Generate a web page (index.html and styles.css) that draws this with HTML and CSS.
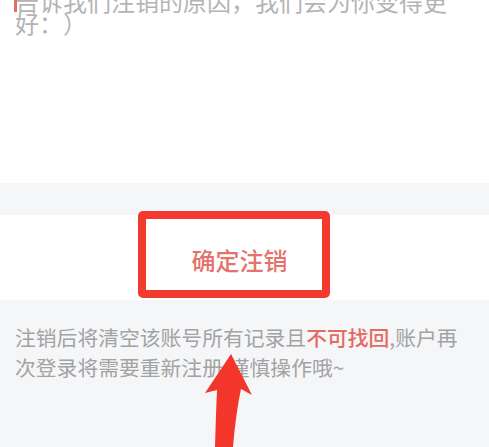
FILE: index.html
```html
<!DOCTYPE html>
<html lang="zh-CN">
<head>
<meta charset="utf-8">
<link rel="stylesheet" href="styles.css">
</head>
<body>
<div class="page">
  <section class="reason">
    <p class="placeholder">告诉我们注销的原因，我们会为你变得更好：）</p>
  </section>
  <div class="gap"></div>
  <section class="action">
    <span class="confirm">确定注销</span>
    <div class="highlight"></div>
  </section>
  <section class="notice">
    <p>注销后将清空该账号所有记录且<span class="warn">不可找回</span>,账户再次登录将需要重新注册,谨慎操作哦~</p>
  </section>
  <svg class="arrow" viewBox="0 0 60 97" width="60" height="97">
    <path d="M31,4 L52,45 L41,39 Q36,62 33,97 L15,97 Q16,62 17,40 L5,43 Z" fill="#f2362c"/>
  </svg>
</div>
</body>
</html>
```
FILE: styles.css
```css
html, body {
  margin: 0;
  padding: 0;
}
body {
  background: #f5f6f8;
  font-family: "Noto Sans CJK SC", "Noto Sans", sans-serif;
}
.page {
  position: relative;
  width: 489px;
  height: 447px;
  overflow: hidden;
}
.reason {
  background: #ffffff;
  height: 183px;
  overflow: hidden;
}
.placeholder {
  position: relative;
  margin: -10.5px 0 0 0;
  padding: 0 34px 0 15px;
  font-size: 24px;
  line-height: 22.5px;
  color: #b4b4b4;
  text-spacing-trim: space-all;
  font-feature-settings: "fwid" 1;
}
.placeholder::before {
  content: "";
  position: absolute;
  left: 14px;
  top: 0;
  width: 3px;
  height: 22.5px;
  background: #e0716a;
}
.gap {
  height: 32px;
}
.action {
  position: relative;
  background: #ffffff;
  height: 85px;
  display: flex;
  align-items: center;
  justify-content: center;
  padding-right: 10px;
}
.confirm {
  font-size: 24px;
  font-weight: 500;
  color: #e3736b;
  margin-top: 3px;
}
.highlight {
  position: absolute;
  left: 138px;
  top: -4px;
  width: 192px;
  height: 87px;
  box-sizing: border-box;
  border: 8px solid #f23a2f;
  border-radius: 5px;
}
.notice {
  padding: 22px 15px 0 15px;
}
.notice p {
  margin: 0;
  font-size: 20.8px;
  line-height: 30px;
  color: #a3a3a3;
}
.warn {
  color: #e46a62;
  font-weight: 500;
}
.arrow {
  position: absolute;
  left: 200px;
  top: 350px;
}
```
